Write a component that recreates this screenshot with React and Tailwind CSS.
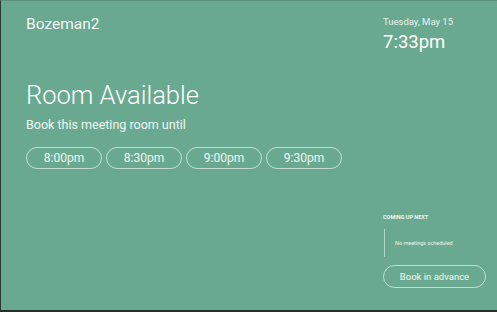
import React from 'react';

const slots = ['8:00pm', '8:30pm', '9:00pm', '9:30pm'];

const App = () => {
    return (
        <div className="w-[497px] h-[312px] bg-[#69a98f] border-l border-l-[#2a3a33] border-t border-t-[#5a8f7a] border-b-2 border-b-[#253029] text-white font-['Roboto',sans-serif] flex overflow-hidden">
            <div className="flex-1 pl-[25px] pt-[12px]">
                <h1 className="text-[15.5px] leading-[22px] text-white/95">Bozeman2</h1>
                <h2 className="mt-[45px] text-[25.5px] leading-[30px] font-light">Room Available</h2>
                <p className="mt-[7px] text-[12.5px] leading-[16px] text-white/90">Book this meeting room until</p>
                <div className="mt-[14px] flex gap-[4px]">
                    {slots.map(s => (
                        <button key={s} className="w-[76px] h-[22px] rounded-full border border-white/60 text-[12px] leading-none text-white/90">
                            {s}
                        </button>
                    ))}
                </div>
            </div>
            <div className="w-[114px] pt-[15px] flex flex-col">
                <p className="text-[9.5px] leading-[12px] text-white/85">Tuesday, May 15</p>
                <p className="mt-[3px] text-[18.5px] leading-[22px]">7:33pm</p>
                <div className="mt-auto mb-[22px] pr-[10px]">
                    <p className="text-[5.5px] font-bold leading-[8px] text-white/90">COMING UP NEXT</p>
                    <div className="mt-[8px] ml-[1px] border-l border-white/50 h-[28px] flex items-center pl-[10px]">
                        <p className="text-[5.5px] leading-[8px] text-white/85">No meetings scheduled</p>
                    </div>
                    <button className="mt-[8px] w-[103px] h-[23px] rounded-full border border-white/60 text-[9.5px] leading-none text-white/90">
                        Book in advance
                    </button>
                </div>
            </div>
        </div>
    );
};

export default App;
